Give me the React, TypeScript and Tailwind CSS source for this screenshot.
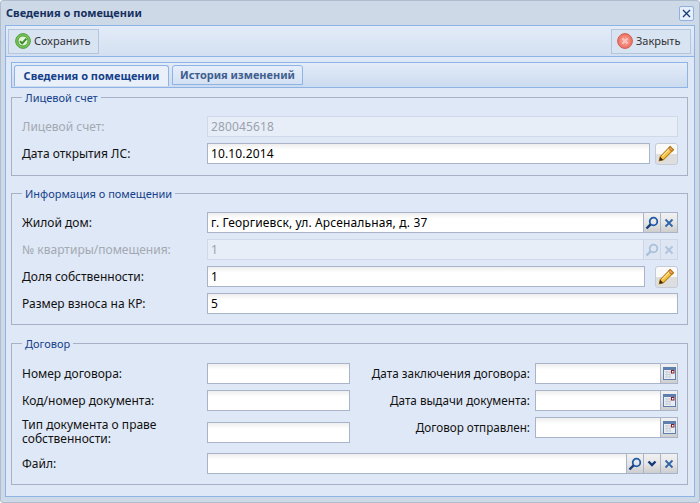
const font = "font-['Noto_Sans',sans-serif]";

function CheckIcon() {
  return (
    <svg width="16" height="16" viewBox="0 0 16 16" className="shrink-0">
      <circle cx="8" cy="8" r="7.400" fill="#74c257" stroke="#5b9d48" />
      <circle cx="8" cy="8" r="5" fill="#e4f3dc" stroke="#4fa53a" />
      <path d="M5 8.200l2.200 2.200L11.400 5.600" fill="none" stroke="#3f8a2a" strokeWidth="2" />
    </svg>
  );
}

function CloseIcon() {
  return (
    <svg width="16" height="16" viewBox="0 0 16 16" className="shrink-0">
      <circle cx="8" cy="8" r="7.400" fill="#ef7a6c" stroke="#cf5c50" />
      <circle cx="8" cy="8" r="5" fill="#f28e82" />
      <path d="M5.500 5.500l5 5M10.500 5.500l-5 5" stroke="#f9c4bc" strokeWidth="2.400" />
    </svg>
  );
}

function Pencil() {
  return (
    <svg width="17" height="17" viewBox="0 0 16 16">
      <path d="M11.500 1.500l3 3L5 14l-3.800.8L2 11z" fill="#f5c242" stroke="#b8790f" />
      <path d="M11.500 1.500l3 3-1.600 1.600-3-3z" fill="#f3a08c" stroke="#b8790f" />
      <path d="M2 11l3 3-3.800.8z" fill="#3a2a10" />
      <path d="M4 10.500l6.500-6.500" stroke="#fbe7a6" />
    </svg>
  );
}

function Search({ faded }: { faded?: boolean }) {
  const c = faded ? "#a9c0dc" : "#1f5ba8";
  return (
    <svg width="14" height="14" viewBox="0 0 14 14">
      <circle cx="8.500" cy="5.500" r="3.800" fill="none" stroke={c} strokeWidth="1.800" />
      <path d="M5.600 8.400L1.500 12.500" stroke={faded ? c : "#173e78"} strokeWidth="2.400" />
    </svg>
  );
}

function Cross({ faded }: { faded?: boolean }) {
  const c = faded ? "#aec3dc" : "#2f66a8";
  return (
    <svg width="10" height="10" viewBox="0 0 10 10">
      <path d="M1.500 1.500l7 7M8.500 1.500l-7 7" stroke={c} strokeWidth="1.800" />
    </svg>
  );
}

function Chevron() {
  return (
    <svg width="10" height="8" viewBox="0 0 10 8">
      <path d="M1.500 1.500L5 5l3.500-3.500" fill="none" stroke="#143a78" strokeWidth="2.400" />
    </svg>
  );
}

function Calendar() {
  return (
    <svg width="13" height="13" viewBox="0 0 13 13">
      <rect x="0.500" y="0.500" width="12" height="12" fill="#e8edf4" stroke="#5f7fae" />
      <rect x="1" y="1" width="11" height="2" fill="#5f7fae" />
      <path d="M2 5h6M2 7.500h6M2 10h6M4 4v7M7 4v7" stroke="#c9d0da" />
      <rect x="8.500" y="3.500" width="2.500" height="2.500" fill="#fff" stroke="#8a1c1c" />
    </svg>
  );
}

function Trigger({ children }: { children: React.ReactNode }) {
  return (
    <div className="w-[18px] h-[21px] -ml-px border border-[#a9b4cb] bg-gradient-to-b from-[#f1f1f1] via-[#e6e6e6] to-[#cdcdcd] flex items-center justify-center shrink-0">
      {children}
    </div>
  );
}

function FadedTrigger({ children }: { children: React.ReactNode }) {
  return (
    <div className="w-[18px] h-[21px] -ml-px border border-[#cbd6e6] bg-[#dde6f2] flex items-center justify-center shrink-0">
      {children}
    </div>
  );
}

function Field({ value, className = "flex-1" }: { value?: string; className?: string }) {
  return (
    <div className={`${className} h-[21px] border border-[#a9b4cb] bg-gradient-to-b from-[#eeeeee] from-0% via-white via-30% to-white px-[3px] leading-[20px] text-[12px] tracking-[0.14px] text-black min-w-0`}>
      {value}
    </div>
  );
}

function EditButton({ gap }: { gap: string }) {
  return (
    <div className={`${gap} w-[23px] h-[22px] rounded-[3px] border border-[#c6ccd6] bg-gradient-to-b from-[#fafafa] from-50% to-[#dedede] to-50% flex items-center justify-center shrink-0`}>
      <Pencil />
    </div>
  );
}

function Row({ label, children, muted }: { label: string; children: React.ReactNode; muted?: boolean }) {
  return (
    <div className="flex items-center h-[21px] mb-[6px] last:mb-0">
      <div className={`w-[185px] shrink-0 text-[12px] ${muted ? "text-[#a3a9b3]" : "text-[#111]"}`}>{label}</div>
      <div className="flex flex-1 items-center min-w-0">{children}</div>
    </div>
  );
}

function Group({ title, className, children }: { title: string; className?: string; children: React.ReactNode }) {
  return (
    <fieldset className={`border border-[#a9b0c6] pl-[10px] pr-[9px] ${className ?? ""}`}>
      <legend className="px-[3px] text-[11px] leading-[13px] text-[#15428b]">{title}</legend>
      {children}
    </fieldset>
  );
}

function DateField({ label }: { label: string }) {
  return (
    <div className="flex items-center h-[21px]">
      <div className="w-[185px] pr-[5px] text-right text-[11.7px] text-[#111] shrink-0 whitespace-nowrap">{label}</div>
      <Field className="flex-1" />
      <Trigger><Calendar /></Trigger>
    </div>
  );
}

function ToolButton({ icon, label, className }: { icon: React.ReactNode; label: string; className: string }) {
  return (
    <div className={`${className} h-[25px] flex items-center gap-[3px] border border-[#b3c6de] bg-[#d9e4f3] text-[11px] text-[#333]`}>
      {icon}
      <span>{label}</span>
    </div>
  );
}

export default function App() {
  return (
    <div className={`${font} w-[700px] h-[503px] bg-[#ced9e7] border border-[#aebccd] rounded-[3px] px-[4px] flex flex-col overflow-hidden`}>
      <div className="h-[24px] shrink-0 flex items-center justify-between pl-[1px] pr-[1px]">
        <span className="text-[11px] font-bold text-[#15315f]">Сведения о помещении</span>
        <div className="w-[15px] h-[15px] rounded-[2px] border border-[#8fb0e0] bg-[#e6eefa] flex items-center justify-center">
          <svg width="9" height="9" viewBox="0 0 9 9"><path d="M1 1l7 7M8 1L1 8" stroke="#173a78" strokeWidth="1.300" /></svg>
        </div>
      </div>

      <div className="h-[472px] shrink-0 border border-[#8eb4e6] bg-[#dfe8f6] flex flex-col">
        <div className="h-[31px] shrink-0 border-b border-[#8eb4e6] bg-gradient-to-b from-[#e3ecf8] to-[#d4e0f1] flex items-center justify-between pl-[2px] pr-[3px]">
          <ToolButton icon={<CheckIcon />} label="Сохранить" className="w-[91px] pl-[6px]" />
          <ToolButton icon={<CloseIcon />} label="Закрыть" className="w-[80px] pl-[5px]" />
        </div>

        <div className="pl-[5px] pr-[6px] pt-[5px]">
          <div className="h-[26px] border border-[#8eb4e6] bg-gradient-to-b from-[#e3ecf8] to-[#ccdbef] flex items-end pl-[2px] gap-[3px] pb-[2px]">
            <div className="w-[155px] h-[21px] -mb-px rounded-t-[3px] border border-b-0 border-[#8eb4e6] bg-[#e9f0fa] flex items-center justify-center text-[11px] font-bold text-[#15428b]">Сведения о помещении</div>
            <div className="w-[131px] h-[20px] rounded-t-[3px] border border-[#8eb4e6] bg-gradient-to-b from-[#e6eefa] to-[#d3e1f3] flex items-center justify-center text-[11px] font-bold text-[#3f5f8f]">История изменений</div>
          </div>

          <Group title="Лицевой счет" className="mt-[3px] pt-[12px] h-[85px]">
            <Row label="Лицевой счет:" muted>
              <div className="flex-1 h-[21px] border border-[#cfd9e8] bg-[#e8eef8] px-[3px] leading-[20px] text-[12px] tracking-[0.14px] text-[#9aa2ad]">280045618</div>
            </Row>
            <Row label="Дата открытия ЛС:">
              <Field value="10.10.2014" />
              <EditButton gap="ml-[5px]" />
            </Row>
          </Group>

          <Group title="Информация о помещении" className="mt-[11px] pt-[12px] h-[138px]">
            <Row label="Жилой дом:">
              <Field value="г. Георгиевск, ул. Арсенальная, д. 37" />
              <Trigger><Search /></Trigger>
              <Trigger><Cross /></Trigger>
            </Row>
            <Row label="№ квартиры/помещения:" muted>
              <div className="flex-1 h-[21px] border border-[#cfd9e8] bg-[#e8eef8] px-[3px] leading-[20px] text-[12px] text-[#9aa2ad]">1</div>
              <FadedTrigger><Search faded /></FadedTrigger>
              <FadedTrigger><Cross faded /></FadedTrigger>
            </Row>
            <Row label="Доля собственности:">
              <Field value="1" />
              <EditButton gap="ml-[10px]" />
            </Row>
            <Row label="Размер взноса на КР:">
              <Field value="5" />
            </Row>
          </Group>

          <Group title="Договор" className="mt-[12px] pt-[13px] h-[148px]">
            <div className="flex">
              <div className="w-[328px] shrink-0">
                <div className="flex items-center h-[21px] mb-[6px]">
                  <div className="w-[185px] shrink-0 text-[12px] text-[#111]">Номер договора:</div>
                  <Field className="w-[143px]" />
                </div>
                <div className="flex items-center h-[21px]">
                  <div className="w-[185px] shrink-0 text-[12px] text-[#111]">Код/номер документа:</div>
                  <Field className="w-[143px]" />
                </div>
                <div className="flex items-center h-[30px] mt-[6px]">
                  <div className="w-[185px] shrink-0 text-[12px] leading-[14px] text-[#111]">Тип документа о праве собственности:</div>
                  <Field className="w-[143px]" />
                </div>
              </div>
              <div className="flex-1 flex flex-col gap-[6px]">
                <DateField label="Дата заключения договора:" />
                <DateField label="Дата выдачи документа:" />
                <DateField label="Договор отправлен:" />
              </div>
            </div>
            <div className="mt-[6px]">
              <Row label="Файл:">
                <Field value="" />
                <Trigger><Search /></Trigger>
                <Trigger><Chevron /></Trigger>
                <Trigger><Cross /></Trigger>
              </Row>
            </div>
          </Group>
        </div>
      </div>
    </div>
  );
}
